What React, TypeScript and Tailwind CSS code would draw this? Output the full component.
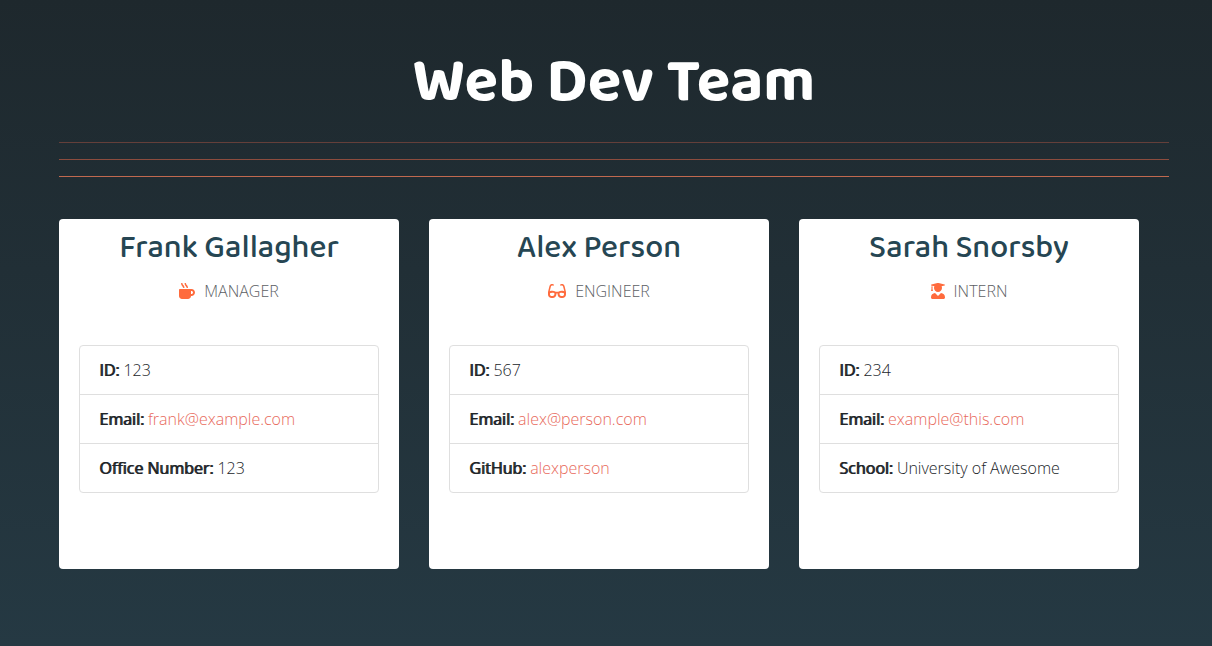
import { FaMugHot, FaGlasses, FaUserGraduate } from "react-icons/fa";
import type { ReactNode } from "react";

type Field = { label: string; value: string; href?: string };
type Member = { name: string; role: string; icon: ReactNode; fields: Field[] };

const team: Member[] = [
  {
    name: "Frank Gallagher",
    role: "MANAGER",
    icon: <FaMugHot className="h-4 w-4" />,
    fields: [
      { label: "ID:", value: "123" },
      { label: "Email:", value: "frank@example.com", href: "mailto:frank@example.com" },
      { label: "Office Number:", value: "123" },
    ],
  },
  {
    name: "Alex Person",
    role: "ENGINEER",
    icon: <FaGlasses className="h-4 w-[18px]" />,
    fields: [
      { label: "ID:", value: "567" },
      { label: "Email:", value: "alex@person.com", href: "mailto:alex@person.com" },
      { label: "GitHub:", value: "alexperson", href: "https://github.com/alexperson" },
    ],
  },
  {
    name: "Sarah Snorsby",
    role: "INTERN",
    icon: <FaUserGraduate className="h-4 w-3.5" />,
    fields: [
      { label: "ID:", value: "234" },
      { label: "Email:", value: "example@this.com", href: "mailto:example@this.com" },
      { label: "School:", value: "University of Awesome" },
    ],
  },
];

function Card({ member }: { member: Member }) {
  return (
    <article className="w-[340px] rounded bg-white px-5 pt-2.5 pb-[76px] text-center">
      <h2 className="text-[32px] leading-10 font-medium text-[#264653] font-['Baloo_2','Open_Sans',sans-serif]">
        {member.name}
      </h2>
      <p className="mt-2.5 flex items-center justify-center gap-[9px] leading-6 text-[#5c6064]">
        <span className="text-[#ff6b3d]">{member.icon}</span>
        {member.role}
      </p>
      <ul className="mt-[42px] divide-y divide-[#dfdfdf] rounded border border-[#dfdfdf] text-left">
        {member.fields.map((f) => (
          <li key={f.label} className="px-[19px] py-3 leading-6">
            <span className="font-normal [text-shadow:1px_0_#212529]">{f.label}</span>{" "}
            {f.href ? <a href={f.href} className="text-[#e86a5c]">{f.value}</a> : f.value}
          </li>
        ))}
      </ul>
    </article>
  );
}

export default function App() {
  return (
    <main className="min-h-screen bg-linear-to-b from-[#1e282d] to-[#253943] pr-[43px] pl-[59px] pt-11 pb-[77px] text-base font-light text-[#212529] font-['Open_Sans',sans-serif]">
      <h1 className="text-center text-[62px] leading-[77px] font-bold text-white font-['Baloo_2','Open_Sans',sans-serif]">
        Web Dev Team
      </h1>
      <div className="mt-[21px] flex flex-col gap-4">
        <hr className="border-[#643f3a]" />
        <hr className="border-[#8c4c3e]" />
        <hr className="border-[#c0694f]" />
      </div>
      <div className="mt-[42px] flex flex-wrap gap-[30px]">
        {team.map((m) => (
          <Card key={m.name} member={m} />
        ))}
      </div>
    </main>
  );
}
